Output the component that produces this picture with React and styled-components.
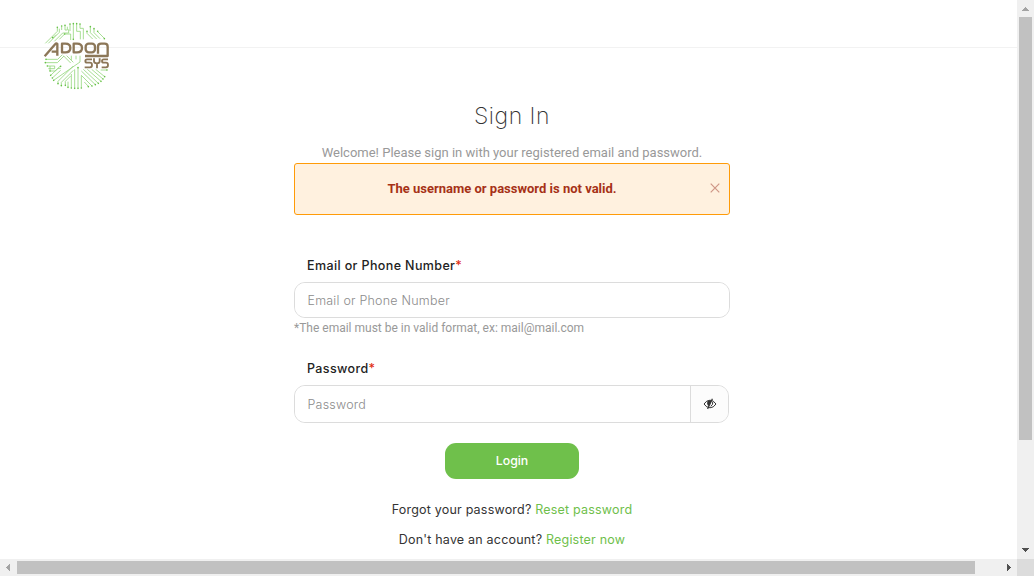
import React from 'react';
import styled, { createGlobalStyle } from 'styled-components';

const Global = createGlobalStyle`
  * { box-sizing: border-box; }
  body { margin: 0; background: #fff; overflow: hidden; font-family: Inter, "Liberation Sans", sans-serif; font-size: 13px; color: #333; }
`;

const Frame = styled.div`
  display: grid;
  grid-template-columns: 1fr 17px;
  grid-template-rows: 559px 17px;
  width: 100vw;
  height: 576px;
`;
const Page = styled.div`
  overflow: hidden;
  background: #fff;
`;
const Header = styled.header`
  height: 48px;
  border-bottom: 1px solid #f2f2f2;
  padding: 16px 0 0 36px;
`;
const Logo = styled.svg`
  display: block;
  position: relative;
`;
const Panel = styled.main`
  width: 436px;
  margin-left: 294px;
  padding-top: 53px;
  display: flex;
  flex-direction: column;
`;
const Title = styled.h1`
  margin: 0;
  height: 30px;
  font-size: 23px;
  line-height: 30px;
  font-weight: 200;
  letter-spacing: 0.5px;
  text-align: center;
`;
const Welcome = styled.p`
  margin: 12px 0 0;
  height: 20px;
  font: 400 13px/20px Roboto, sans-serif;
  color: #999;
  text-align: center;
`;
const Alert = styled.div`
  display: grid;
  grid-template-columns: 8px 1fr 28px;
  align-items: center;
  height: 52px;
  border: 1px solid #ff9b08;
  border-radius: 3px;
  background: #fff1df;
  color: #a63117;
  font: 700 13px/20px Roboto, sans-serif;
  text-align: center;
`;
const AlertText = styled.span`
  grid-column: 2;
`;
const Close = styled.button`
  border: 0;
  padding: 0;
  height: 12px;
  background: none;
  display: flex;
  justify-content: center;
`;
const Label = styled.label`
  margin: ${p => p.$top}px 0 0 13px;
  height: 19px;
  line-height: 20px;
  font-size: 12.5px;
  font-weight: 500;
  letter-spacing: 0.38px;
  color: #222;
`;
const Required = styled.span`
  color: #e02b10;
`;
const Field = styled.div`
  display: flex;
  width: ${p => p.$width}px;
  height: ${p => p.$height}px;
  margin-top: 7px;
  border: 1px solid #dcdcdc;
  border-radius: 11px;
  overflow: hidden;
`;
const Input = styled.input`
  flex: 1;
  min-width: 0;
  border: 0;
  outline: 0;
  padding: 2px 12px 0 12.5px;
  background: #fff;
  font: 300 12.5px/20px Inter, sans-serif;
  letter-spacing: 0.22px;
  &::placeholder { color: #8c8c8c; opacity: 1; }
`;
const Toggle = styled.button`
  width: 38px;
  border: 0;
  border-left: 1px solid #dcdcdc;
  padding: 0;
  background: #fcfcfc;
  display: flex;
  align-items: center;
  justify-content: center;
`;
const Hint = styled.div`
  height: 20px;
  font: 400 12px/20px Roboto, sans-serif;
  color: #999;
`;
const Login = styled.button`
  align-self: center;
  width: 134px;
  height: 36px;
  margin-top: 20px;
  border: 0;
  border-radius: 11px;
  background: #6fc04b;
  color: #fff;
  font: 500 12.3px/20px Inter, sans-serif;
`;
const Prompt = styled.p`
  margin: ${p => p.$top}px 0 0;
  height: 20px;
  font-size: 12.5px;
  line-height: 20px;
  text-align: center;
  letter-spacing: 0.2px;
`;
const Link = styled.a`
  color: #6fc04b;
`;
const VBar = styled.div`
  display: flex;
  flex-direction: column;
  justify-content: space-between;
  align-items: center;
  background: #f0f0f0;
`;
const HBar = styled.div`
  display: flex;
  justify-content: space-between;
  align-items: center;
  background: #f0f0f0;
`;
const VThumb = styled.div`
  width: 13px;
  height: 423px;
  margin-bottom: auto;
  background: #c1c1c1;
`;
const HThumb = styled.div`
  width: 958px;
  height: 13px;
  margin-right: auto;
  background: #c1c1c1;
`;
const Corner = styled.div`
  background: #dcdcdc;
`;
const Arrow = styled.svg`
  width: 17px;
  height: 17px;
  flex: none;
`;

const arrows = {
  up: 'M5 11h7v-1h-1V9h-1V8H9V7H8v1H7v1H6v1H5z',
  down: 'M5 6h7v1h-1v1h-1v1H9v1H8V9H7V8H6V7H5z',
  left: 'M10 5v7H9v-1H8v-1H7V9H6V8h1V7h1V6h1V5z',
  right: 'M7 5v7h1v-1h1v-1h1V9h1V8h-1V7H9V6H8V5z',
};
const ScrollArrow = ({ dir, color }) => (
  <Arrow viewBox="0 0 17 17" shapeRendering="crispEdges"><path d={arrows[dir]} fill={color} /></Arrow>
);

const traces = [
  'M28 82L64 46V34M37 82L70 49V38', 'M50 66L60 56M55 76L80 51H98V40',
  'M77 31V42M87 28V42H94V32M104 72V54H86L70 70M102 24V45M112 24V70M122 24V46H133V70',
  'M132 24V37H142V70M153 46V52L170 69M163 33V50L182 69M174 39V50L192 68M185 47L205 67',
  'M30 130H65L79 116M28 140H64L84 120M34 150H56V158H37M42 150V165H58L66 157H74',
  'M82 119L104 141M92 119L112 139M132 119V138L53 193M106 119V132M120 119V130',
  'M72 151L44 178M74 163L49 186M112 150L66 196V203M112 163L76 199V209M104 180L88 196V208',
  'M96 197V213M106 174V215M116 160V216M126 155V216M136 178V215',
  'M136 165L178 206M142 160L187 202M154 160L195 196M167 160L201 189M179 160L206 182M194 162H213M136 178L168 210M145 198L157 211',
];
const nodes = [[64,34],[77,30],[87,28],[102,24],[112,23],[122,23],[132,24],[153,46],[163,32],[174,38],[185,46],[205,68],[50,65],[86,54],[112,70],[30,130],[28,140],[34,150],[42,165],[74,151],[66,203],[76,209],[88,208],[96,214],[106,216],[116,217],[126,217],[136,216],[157,212],[168,210],[178,206],[187,202],[195,196],[201,189],[206,182],[213,162],[44,178],[49,186],[53,193],[126,155]];

const Brand = () => (
  <Logo width="80" height="80" viewBox="0 0 240 240" fill="none" aria-label="Addon Sys">
    <g stroke="#92d57a" strokeWidth="2.4">{traces.map(d => <path key={d} d={d} />)}</g>
    <g fill="#65c044">{nodes.map(([x, y]) => <circle key={`${x}-${y}`} cx={x} cy={y} r="2.4" />)}</g>
    <g stroke="#8c7758" strokeWidth="7" strokeLinejoin="round">
      <path d="M26 121L58 84Q61 80 64 84V119M47 107H64" />
      <path d="M78 83H88Q103 83 103 96Q103 109 88 109H78ZM113 83H123Q138 83 138 96Q138 109 123 109H113Z" />
      <rect x="149" y="83" width="28" height="26" rx="9" />
      <path d="M186 113V92Q186 83 195 83H206Q215 83 215 92V120H147" />
      <path strokeWidth="5.5" d="M168 130H153Q148 130 148 135Q148 140 153 140H162Q168 140 168 147Q168 154 162 154H146M174 127V136Q174 142 183 142Q191 142 191 136V127M183 142V157M216 130H203Q198 130 198 135Q198 140 203 140H210Q216 140 216 147Q216 154 210 154H197" />
    </g>
  </Logo>
);

export default function App() {
  return (
    <>
      <Global />
      <Frame>
        <Page>
          <Header><Brand /></Header>
          <Panel>
            <Title>Sign In</Title>
            <Welcome>Welcome! Please sign in with your registered email and password.</Welcome>
            <Alert role="alert">
              <AlertText>The username or password is not valid.</AlertText>
              <Close aria-label="Close">
                <svg width="10" height="10" viewBox="0 0 10 10"><path d="M.7.7l8.6 8.6M9.3.7L.7 9.3" stroke="#cf9686" strokeWidth="1.2" /></svg>
              </Close>
            </Alert>
            <Label $top={41} htmlFor="email">Email or Phone Number<Required>*</Required></Label>
            <Field $width={436} $height={36}><Input id="email" placeholder="Email or Phone Number" /></Field>
            <Hint>*The email must be in valid format, ex: mail@mail.com</Hint>
            <Label $top={21} htmlFor="password">Password<Required>*</Required></Label>
            <Field $width={435} $height={38}>
              <Input id="password" type="password" placeholder="Password" />
              <Toggle aria-label="Show password">
                <svg width="14" height="12" viewBox="0 0 14 12" fill="none" stroke="#333">
                  <path d="M1 6Q3.5 2.2 7 2.2T13 6Q10.5 9.8 7 9.8T1 6Z" />
                  <path d="M4.3 3.4Q3.4 6 5.4 8.3L8.7 2.9Q6 2 4.3 3.4Z" fill="#333" stroke="none" />
                  <path d="M9.4.8L4.6 11" strokeWidth="1.2" />
                  <path d="M9.7 4Q10.4 6.5 7.7 8.3" />
                </svg>
              </Toggle>
            </Field>
            <Login>Login</Login>
            <Prompt $top={21}>Forgot your password? <Link>Reset password</Link></Prompt>
            <Prompt $top={10}>Don't have an account? <Link>Register now</Link></Prompt>
          </Panel>
        </Page>
        <VBar><ScrollArrow dir="up" color="#a3a3a3" /><VThumb /><ScrollArrow dir="down" color="#505050" /></VBar>
        <HBar><ScrollArrow dir="left" color="#a3a3a3" /><HThumb /><ScrollArrow dir="right" color="#505050" /></HBar>
        <Corner />
      </Frame>
    </>
  );
}
